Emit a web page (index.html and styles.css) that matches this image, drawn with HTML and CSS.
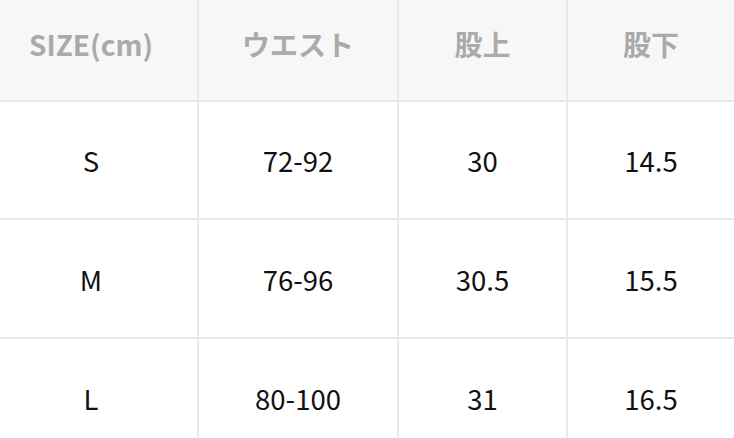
FILE: index.html
```html
<!DOCTYPE html>
<html lang="ja">
<head>
<meta charset="utf-8">
<link rel="stylesheet" href="styles.css">
</head>
<body>
<div class="size-table">
  <div class="cell head first">SIZE(cm)</div>
  <div class="cell head">ウエスト</div>
  <div class="cell head">股上</div>
  <div class="cell head">股下</div>

  <div class="cell first">S</div>
  <div class="cell">72-92</div>
  <div class="cell">30</div>
  <div class="cell">14.5</div>

  <div class="cell first">M</div>
  <div class="cell">76-96</div>
  <div class="cell">30.5</div>
  <div class="cell">15.5</div>

  <div class="cell first">L</div>
  <div class="cell">80-100</div>
  <div class="cell">31</div>
  <div class="cell">16.5</div>
</div>
</body>
</html>
```
FILE: styles.css
```css
html, body {
  margin: 0;
  padding: 0;
  background: #ffffff;
}
body {
  font-family: "Noto Sans CJK JP", "Noto Sans", sans-serif;
  overflow: hidden;
}
.size-table {
  display: grid;
  grid-template-columns: 197px 198px 167px 166px;
  grid-template-rows: 100px 116px 117px 117px;
  gap: 2px;
  background: #e8e8e8;
  width: 736px;
}
.cell {
  background: #ffffff;
  display: flex;
  align-items: center;
  justify-content: center;
  font-size: 27.5px;
  color: #111111;
}
.cell.first {
  padding-right: 15px;
}
.cell.head {
  background: #f7f7f7;
  color: #aaaaaa;
  font-weight: 700;
  font-size: 28px;
  padding-bottom: 12px;
}
```
